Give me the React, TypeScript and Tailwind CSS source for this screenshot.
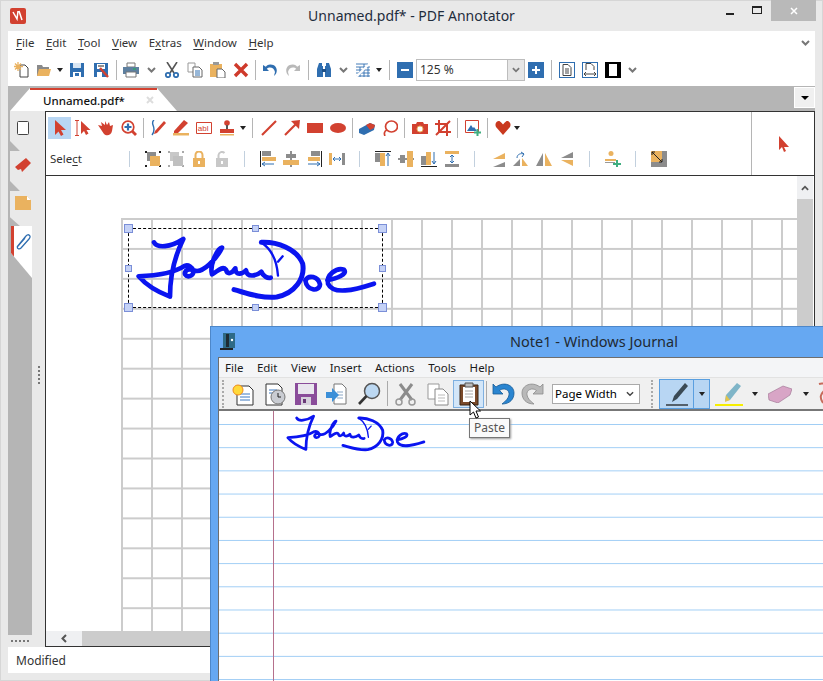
import type { ReactNode } from "react"

const R = "#d24130"
const B = "#2f6eb0"
const O = "#eab25f"
const G = "#8c8c8c"
const L = "#c8c8c8"

function Ico({ children, s = "w-4 h-4" }: { children: ReactNode; s?: string }) {
  return (
    <svg viewBox="0 0 16 16" className={s}>
      {children}
    </svg>
  )
}

function Slot({ children, w = "w-[23px]" }: { children?: ReactNode; w?: string }) {
  return <div className={`${w} h-full flex items-center justify-center shrink-0`}>{children}</div>
}

function Sep({ w = "w-[6px]", c = "bg-[#b5b5b5]", h = "h-[20px]" }: { w?: string; c?: string; h?: string }) {
  return (
    <div className={`${w} h-full flex items-center justify-center shrink-0`}>
      <div className={`w-px ${h} ${c}`} />
    </div>
  )
}

function Caret({ w = "w-[10px]" }: { w?: string }) {
  return (
    <div className={`${w} h-full flex items-center justify-center shrink-0`}>
      <div className="w-0 h-0 border-x-[3.5px] border-x-transparent border-t-[4px] border-t-[#222]" />
    </div>
  )
}

function Chevron({ w = "w-[16px]" }: { w?: string }) {
  return (
    <div className={`${w} h-full flex items-center justify-center shrink-0`}>
      <svg viewBox="0 0 9 6" className="w-[9px] h-[6px]">
        <path d="M1 1l3.5 3.5L8 1" fill="none" stroke="#777" strokeWidth="2" />
      </svg>
    </div>
  )
}

function Signature({ s }: { s: string }) {
  return (
    <svg viewBox="0 0 840 330" className={s} fill="none" stroke="#0a14f0" strokeWidth="14" strokeLinecap="round" strokeLinejoin="round">
      <path d="M102 82C112 100 150 98 190 72C170 112 150 170 150 245C110 230 80 212 56 184C110 182 165 172 195 152C218 146 232 182 205 184C186 182 194 156 222 166C248 178 292 128 306 98C292 100 268 150 276 178C290 172 306 150 318 164C322 180 336 176 346 160C346 184 368 176 378 166C382 190 410 182 424 170C430 186 444 190 452 188" />
      <path d="M424 82C470 80 530 100 548 146C556 190 524 236 470 246C420 250 380 234 342 224" strokeWidth="15" />
      <path d="M426 84C450 100 470 130 474 182M474 140L488 124" strokeWidth="7" />
      <path d="M556 196C566 178 594 184 600 208C598 232 560 228 556 196" />
      <path d="M622 196C650 190 684 178 672 164C650 156 618 180 624 206C640 240 700 226 762 206" />
    </svg>
  )
}

function Handle({ big, pos }: { big?: boolean; pos: string }) {
  return (
    <div
      className={`absolute ${pos} ${big ? "w-[9px] h-[9px]" : "w-[7px] h-[7px]"} bg-[#c5d2f6] border border-[#7b8fd8]`}
    />
  )
}

const mainToolbar = (
  <div className="h-[24px] flex items-center pl-[2px] mt-[3px]">
    <Slot>
      <Ico>
        <path d="M6 3h5l3 3v9H6z" fill="#fff" stroke="#444" />
        <path d="M4 0v9M0 4.500h9M1 1.500l6 6M7 1.500l-6 6" stroke={O} strokeWidth="1.300" />
      </Ico>
    </Slot>
    <Slot w="w-[22px]">
      <Ico>
        <path d="M1 3h5l1 2h6v9H1z" fill="#8a8a8a" />
        <path d="M1 14l2-7h12l-2 7z" fill={O} />
      </Ico>
    </Slot>
    <Caret />
    <Slot w="w-[24px]">
      <Ico>
        <path d="M1 1h14v14H1z" fill={B} />
        <path d="M4 1h8v5H4z" fill="#d9e6f3" />
        <path d="M4 10h8v5H4z" fill="#fff" />
        <path d="M6 11h4v3H6z" fill={B} />
      </Ico>
    </Slot>
    <Slot w="w-[24px]">
      <Ico>
        <path d="M1 1h14v14H1z" fill={B} />
        <path d="M4 2h8v5H4z" fill="#fff" />
        <path d="M5 4h6" stroke="#222" />
        <path d="M4 10h5v5H4z" fill="#fff" />
        <path d="M7 6l8 9" stroke={R} strokeWidth="2.400" />
      </Ico>
    </Slot>
    <Sep />
    <Slot>
      <Ico>
        <path d="M4 1h8v4H4z" fill="#fff" stroke="#777" />
        <path d="M0 5h16v7H0z" fill="#5d7f9f" />
        <path d="M3 10h10v5H3z" fill="#fff" stroke="#777" />
        <path d="M10 7h3" stroke="#2fa36b" strokeWidth="1.500" />
      </Ico>
    </Slot>
    <Chevron w="w-[18px]" />
    <Slot>
      <Ico>
        <path d="M3 0l7 11M13 0L6 11" stroke="#555" strokeWidth="1.600" />
        <circle cx="4" cy="13" r="2.200" fill="none" stroke={B} strokeWidth="1.800" />
        <circle cx="12" cy="13" r="2.200" fill="none" stroke={B} strokeWidth="1.800" />
      </Ico>
    </Slot>
    <Slot>
      <Ico>
        <path d="M1 1h7l0 9H1z" fill="#fff" stroke="#999" />
        <path d="M6 5h6l3 3v7H6z" fill="#fff" stroke="#666" />
        <path d="M8 9h5M8 11h5M8 13h5" stroke={B} />
      </Ico>
    </Slot>
    <Slot>
      <Ico>
        <path d="M0 2h12v13H0z" fill={O} />
        <path d="M3 0h6v3H3z" fill="#999" />
        <path d="M7 7h5l3 3v6H7z" fill="#fff" stroke="#666" />
      </Ico>
    </Slot>
    <Slot>
      <Ico>
        <path d="M2 2l12 12M14 2L2 14" stroke="#cf3a2b" strokeWidth="3.400" />
      </Ico>
    </Slot>
    <Sep />
    <Slot w="w-[24px]">
      <Ico>
        <path d="M1 3v6h6L4.800 6.800C7 4.500 12 5 13 10L12 14C17 10 15 2 8 2.500C6.500 2.600 5 3.300 3.800 4.800z" fill={B} />
      </Ico>
    </Slot>
    <Slot w="w-[22px]">
      <Ico>
        <path d="M15 3v6H9l2.200-2.200C9 4.500 4 5 3 10L4 14C-1 10 1 2 8 2.500C9.500 2.600 11 3.300 12.200 4.800z" fill="#b9b9b9" />
      </Ico>
    </Slot>
    <Sep w="w-[8px]" />
    <Slot>
      <Ico>
        <path d="M3 1h3v3h1v11H1V7zM13 1h-3v3H9v11h6V7z" fill={B} />
        <path d="M6 7h4v3H6z" fill="#1d4f86" />
      </Ico>
    </Slot>
    <Chevron />
    <Slot>
      <Ico>
        <path d="M1 2h12M1 5h14M1 8h14M1 11h14M1 14h14M5 5v10M9 2v13M13 5v10" stroke={B} strokeWidth=".9" />
        <path d="M1 15L13 3" stroke="#fff" strokeWidth="2" />
      </Ico>
    </Slot>
    <Caret />
    <Sep w="w-[10px]" />
    <Slot w="w-[22px]">
      <div className="w-4 h-4 bg-[#2f6eb0] flex items-center justify-center">
        <div className="w-2 h-[2px] bg-white" />
      </div>
    </Slot>
    <div className="w-[109px] h-[22px] border border-[#bdbdbd] flex items-center justify-between shrink-0 text-[12px] text-[#333] pl-[3px]">
      125 %
      <div className="w-[17px] h-full bg-[#e6e6e6] border-l border-[#bdbdbd] flex items-center justify-center">
        <svg viewBox="0 0 9 6" className="w-[8px] h-[6px]">
          <path d="M1 1l3.500 3.500L8 1" fill="none" stroke="#777" strokeWidth="2" />
        </svg>
      </div>
    </div>
    <Slot w="w-[22px]">
      <div className="w-4 h-4 bg-[#2f6eb0] flex items-center justify-center text-white relative">
        <div className="w-2 h-[2px] bg-white" />
        <div className="absolute w-[2px] h-2 bg-white" />
      </div>
    </Slot>
    <Sep w="w-[8px]" />
    <Slot>
      <div className="w-4 h-4 border border-[#2f6eb0] flex items-center justify-center">
        <svg viewBox="0 0 10 12" className="w-[10px] h-3">
          <path d="M1 .5h5l3 3v8H1zM3 5h4M3 7h4M3 9h4" fill="none" stroke="#444" />
        </svg>
      </div>
    </Slot>
    <Slot>
      <div className="w-4 h-4 border border-[#2f6eb0] flex items-center justify-center">
        <svg viewBox="0 0 14 14" className="w-[14px] h-[14px]">
          <path d="M3 7V.5h5l3 3V7M1 11h12M1 11l2-2M1 11l2 2M13 11l-2-2M13 11l-2 2" fill="none" stroke="#444" />
        </svg>
      </div>
    </Slot>
    <Slot>
      <div className="w-4 h-4 bg-black flex items-center justify-center">
        <div className="w-2 h-3 bg-white" />
      </div>
    </Slot>
    <Chevron />
  </div>
)

const drawRow = (
  <div className="h-[31px] flex items-center pl-[2px]">
    <div className="w-[23px] h-[22px] bg-[#b8d6f3] flex items-center justify-center shrink-0">
      <Ico>
        <path d="M3 0v15l3.500-3.500 2.500 4.500 2.500-1.500-2.500-4.500h5z" fill={R} />
      </Ico>
    </div>
    <Slot>
      <Ico>
        <path d="M0 .5h4M0 15.500h4M2 1v14" stroke={R} />
        <path d="M6 1v13l3-3 2 4 2.500-1.500-2-3.500h4z" fill={R} />
      </Ico>
    </Slot>
    <Slot>
      <Ico>
        <path d="M0 5l4 1-1-4 4 3 0-4 2 4 2-3 1 4 3-1-1 6c-1 5-6 5-8 3z" fill={R} />
      </Ico>
    </Slot>
    <Slot>
      <Ico>
        <circle cx="7" cy="7" r="5.800" fill="#fff" stroke={R} strokeWidth="1.700" />
        <path d="M7 3.500v7M3.500 7h7" stroke={B} strokeWidth="2.200" />
        <path d="M11 11l4 4" stroke={R} strokeWidth="2.800" />
      </Ico>
    </Slot>
    <Sep />
    <Slot>
      <Ico>
        <path d="M4 0c-5 4 4 7-2 15" fill="none" stroke={B} strokeWidth="1.400" />
        <path d="M5 11L14 1l2 2-9 10-3 1z" fill={R} />
      </Ico>
    </Slot>
    <Slot>
      <Ico>
        <path d="M1 11L11 0l4 3-10 10H1z" fill={R} />
        <path d="M0 13h16v2.500H0z" fill={O} />
      </Ico>
    </Slot>
    <Slot>
      <Ico>
        <path d="M.5 2.500h15v11H.500z" fill="#fff" stroke={R} />
        <text x="1.800" y="11" fontSize="8" fill={R} fontFamily="Liberation Sans">abl</text>
      </Ico>
    </Slot>
    <Slot>
      <Ico>
        <circle cx="8" cy="3" r="2.800" fill={R} />
        <path d="M7 5h2v4H7z" fill="#555" />
        <path d="M1 9h14v4H1z" fill={R} />
        <path d="M1 14h14v1.500H1z" fill={O} />
      </Ico>
    </Slot>
    <Caret />
    <Sep w="w-[9px]" />
    <Slot>
      <Ico>
        <path d="M1 15L15 1" stroke={R} strokeWidth="2.200" />
      </Ico>
    </Slot>
    <Slot>
      <Ico>
        <path d="M1 15L12 4" stroke={R} strokeWidth="2.200" />
        <path d="M7 1l9-1-1 9z" fill={R} />
      </Ico>
    </Slot>
    <Slot>
      <Ico>
        <path d="M0 3h16v10H0z" fill={R} />
      </Ico>
    </Slot>
    <Slot>
      <Ico>
        <ellipse cx="8" cy="8" rx="8" ry="5" fill={R} />
      </Ico>
    </Slot>
    <Sep />
    <Slot>
      <Ico>
        <path d="M0 9l11-6 5 2-1 5-10 5-5-2z" fill={B} />
        <path d="M7 5l4-2 5 2-1 3-4 2z" fill={R} />
      </Ico>
    </Slot>
    <Slot>
      <Ico>
        <ellipse cx="9.500" cy="6.500" rx="6" ry="5.500" fill="none" stroke={R} strokeWidth="1.700" />
        <path d="M5 10c-3 1-3 4-2 6" fill="none" stroke={R} strokeWidth="1.700" />
      </Ico>
    </Slot>
    <Sep w="w-[7px]" />
    <Slot>
      <Ico>
        <path d="M0 4h4l1-2h6l1 2h4v10H0z" fill={R} />
        <circle cx="8" cy="9" r="3" fill="#fff" stroke={O} />
      </Ico>
    </Slot>
    <Slot>
      <Ico>
        <path d="M4 0v12h12M0 4h12v12M1 15L15 1" fill="none" stroke={R} strokeWidth="2" />
      </Ico>
    </Slot>
    <Sep w="w-[7px]" />
    <Slot>
      <Ico>
        <path d="M.5.5h13v12H.500z" fill="#fff" stroke={R} />
        <path d="M2 11l4-6 2 3 1-1 3 4z" fill={B} />
        <path d="M9 12.500h7M12.500 9v7" stroke="#3fae80" strokeWidth="2" />
      </Ico>
    </Slot>
    <Sep w="w-[7px]" />
    <Slot>
      <Ico>
        <path d="M8 15L1 7C-1 3 3 0 5 1.500c1 .5 2 1.500 3 3 1-1.500 2-2.500 3-3C13 0 17 3 15 7z" fill="#c9391f" />
      </Ico>
    </Slot>
    <Caret w="w-[6px]" />
  </div>
)

const alignIcons = [
  <><path d="M0 0h2v2H0zM14 0h2v2h-2zM0 14h2v2H0zM14 14h2v2h-2z" fill="#222" /><path d="M2 1h9v9H2z" fill={G} /><path d="M5 5h10v10H5z" fill={O} /></>,
  <><path d="M0 0h2v2H0zM14 0h2v2h-2zM0 14h2v2H0zM14 14h2v2h-2z" fill="#aaa" /><path d="M2 1h9v9H2z" fill={L} /><path d="M5 5h10v10H5z" fill="#c0c0c0" /></>,
  <><path d="M2 7h12v9H2z" fill={O} /><path d="M4.500 7V4a3.500 3.500 0 017 0v3" fill="none" stroke={O} strokeWidth="2" /><path d="M7 10h2v3H7z" fill="#fff" /></>,
  <><path d="M2 7h12v9H2z" fill={L} /><path d="M4.500 7V4a3.500 3.500 0 016-2" fill="none" stroke={L} strokeWidth="2" /><path d="M7 10h2v3H7z" fill="#fff" /></>,
]

const layoutIcons = [
  <><path d="M.5 0v16" stroke="#222" /><path d="M2 0h9v5H2z" fill={G} /><path d="M2 6h14v4H2z" fill={O} /><path d="M2 13h12M2 13l3-2M2 13l3 2" stroke={B} fill="none" /></>,
  <><path d="M8 0v16" stroke="#222" /><path d="M3 3h10v4H3z" fill={G} /><path d="M0 9h16v5H0z" fill={O} /></>,
  <><path d="M15.500 0v16" stroke="#222" /><path d="M5 0h9v5H5z" fill={G} /><path d="M2 6h12v4H2z" fill={O} /><path d="M2 13h12M14 13l-3-2M14 13l-3 2" stroke={B} fill="none" /></>,
  <><path d="M0 2h3v12H0z" fill={O} /><path d="M13 2h3v12h-3z" fill={G} /><path d="M4 8h8M4 8l2-2M4 8l2 2M12 8l-2-2M12 8l-2 2" stroke={B} fill="none" /></>,
]

const arrangeIcons = [
  <><path d="M0 .5h16" stroke="#222" /><path d="M0 2h5v9H0z" fill={G} /><path d="M5 2h5v13H5z" fill={O} /><path d="M13 15V2M13 2l-2 3M13 2l2 3" stroke={B} fill="none" /></>,
  <><path d="M0 8h16" stroke="#222" /><path d="M2 4h5v8H2z" fill={G} /><path d="M9 0h6v16H9z" fill={O} /></>,
  <><path d="M0 15.500h16" stroke="#222" /><path d="M0 5h5v9H0z" fill={G} /><path d="M5 1h5v13H5z" fill={O} /><path d="M13 1v12M13 13l-2-3M13 13l2-3" stroke={B} fill="none" /></>,
  <><path d="M1 0h14v3H1z" fill={O} /><path d="M1 13h14v3H1z" fill={G} /><path d="M8 4v8M8 4l-2 2M8 4l2 2M8 12l-2-2M8 12l2-2" stroke={B} fill="none" /></>,
]

const flipIcons = [
  <><path d="M3 8L15 2v6z" fill={O} /><path d="M3 16l12-5v5z" fill={G} /></>,
  <><path d="M0 15l7-7v7z" fill={G} /><path d="M9 7l6 8H9z" fill={O} /><path d="M4 7c0-4 4-5 7-4M11 3L8 1M11 3L9 6" stroke={B} fill="none" /></>,
  <><path d="M7 2v13H0z" fill={G} /><path d="M9 2v13h7z" fill={O} /></>,
  <><path d="M14 1v6H2z" fill={G} /><path d="M2 9h12v6z" fill={O} /></>,
]

const editRow = (
  <div className="h-[32px] flex items-center">
    <div className="w-[72px] pl-[4px] text-[11.500px] text-[#333] shrink-0">
      Sele<u className="underline-offset-2">c</u>t
    </div>
    <Sep w="w-[23px]" c="bg-[#c2d0de]" h="h-[16px]" />
    {alignIcons.map((icon, i) => (
      <Slot key={i}>
        <Ico>{icon}</Ico>
      </Slot>
    ))}
    <Sep w="w-[23px]" c="bg-[#c2d0de]" h="h-[16px]" />
    {layoutIcons.map((icon, i) => (
      <Slot key={i}>
        <Ico>{icon}</Ico>
      </Slot>
    ))}
    <Sep w="w-[23px]" c="bg-[#c2d0de]" h="h-[16px]" />
    {arrangeIcons.map((icon, i) => (
      <Slot key={i}>
        <Ico>{icon}</Ico>
      </Slot>
    ))}
    <Sep w="w-[23px]" c="bg-[#c2d0de]" h="h-[16px]" />
    {flipIcons.map((icon, i) => (
      <Slot key={i}>
        <Ico>{icon}</Ico>
      </Slot>
    ))}
    <Sep w="w-[23px]" c="bg-[#c2d0de]" h="h-[16px]" />
    <Slot>
      <Ico>
        <circle cx="6" cy="2.500" r="2.500" fill={O} />
        <path d="M0 8h11v2H0z" fill={O} />
        <path d="M0 11h10v1H0z" fill="#999" />
        <path d="M8 13h8M12 9v7" stroke="#3fae80" strokeWidth="2" />
      </Ico>
    </Slot>
    <Sep w="w-[23px]" c="bg-[#c2d0de]" h="h-[16px]" />
    <Slot>
      <Ico>
        <path d="M0 0h16v16H0z" fill={G} />
        <path d="M0 0h11v11H0z" fill={O} />
        <path d="M1 1l10 10M1 1v3M1 1h3M11 11V8M11 11H8" stroke="#222" fill="none" />
      </Ico>
    </Slot>
  </div>
)

function Sidebar() {
  return (
    <div className="w-[37px] shrink-0 flex">
      <div className="w-[24px] bg-[#b5b5b5] flex flex-col pl-[2px]">
        <div className="h-[40px] pb-[6px] bg-[#e9e9e9] [clip-path:polygon(0_0,100%_0,100%_100%,45%_100%,0_75%)] flex items-center justify-center">
          <svg viewBox="0 0 12 14" className="w-[12px] h-[14px] ml-[4px]">
            <rect x=".5" y=".5" width="11" height="13" rx="1" fill="#fff" stroke="#444" />
          </svg>
        </div>
        <div className="h-[40px] pb-[12px] bg-[#e9e9e9] [clip-path:polygon(0_0,100%_0,100%_100%,45%_100%,0_75%)] flex items-center justify-center">
          <svg viewBox="0 0 16 16" className="w-4 h-4 ml-[4px]">
            <path d="M0 10L11 1l5 5-9 9-1-3-3 1z" fill={R} />
          </svg>
        </div>
        <div className="h-[35px] pb-[12px] bg-[#e9e9e9] [clip-path:polygon(0_0,100%_0,100%_100%,45%_100%,0_75%)] flex items-center justify-center">
          <svg viewBox="0 0 16 14" className="w-4 h-[14px] ml-[4px]">
            <path d="M0 0h12l4 4v10H0z" fill={O} />
            <path d="M12 0l4 4h-4z" fill="#fff" />
          </svg>
        </div>
        <div className="h-[52px] ml-px bg-white border-l-[3px] border-[#d24130] [clip-path:polygon(0_0,100%_0,100%_100%,0_52%)] flex items-start justify-center pt-[6px]">
          <svg viewBox="0 0 16 20" className="w-4 h-5">
            <path d="M2 15L11 4c2-3 6 0 3 3l-8 9c-2 2-5 0-3-2l7-8" fill="none" stroke="#2f6eb0" strokeWidth="1.300" />
          </svg>
        </div>
        <div className="flex-1" />
        <div className="h-[12px] bg-[#e9e9e9] -ml-[2px] flex items-center justify-center gap-[2px]">
          {[0, 1, 2, 3, 4].map((i) => (
            <div key={i} className="w-[2px] h-[2px] bg-[#777]" />
          ))}
        </div>
      </div>
      <div className="flex-1 flex flex-col items-center justify-center gap-[2px] pb-[8px]">
        {[0, 1, 2, 3, 4].map((i) => (
          <div key={i} className="w-[2px] h-[2px] bg-[#777]" />
        ))}
      </div>
    </div>
  )
}

function JournalWindow() {
  return (
    <div className="absolute left-[210px] top-[326px] w-[660px] h-[400px] bg-[#66a8f2] border border-[#4d87c9] flex flex-col font-['Noto_Sans',sans-serif]">
      <div className="h-[30px] relative flex items-center justify-center pl-[108px] shrink-0">
        <div className="absolute left-[9px] top-[6px]">
          <svg viewBox="0 0 16 18" className="w-4 h-[18px]">
            <path d="M3 0h12v15H3z" fill="#2e6a86" />
            <path d="M0 15h13v2H0z" fill="#222" />
            <path d="M6 1h3v13H6z" fill="#1e2b33" />
            <circle cx="12" cy="7" r="1.200" fill="#fff" />
          </svg>
        </div>
        <span className="text-[14.500px] text-[#1f2a33]">Note1 - Windows Journal</span>
      </div>
      <div className="flex-1 ml-[7px] border-l border-t border-[#6e6e6e] bg-[#f4f5f7] flex flex-col">
        <div className="h-[20px] flex items-center text-[11.500px] text-[#1a1a1a] gap-[13.500px] pl-[6px] shrink-0 border-b border-[#e2e2e2]">
          <span>File</span>
          <span>Edit</span>
          <span>View</span>
          <span>Insert</span>
          <span>Actions</span>
          <span>Tools</span>
          <span>Help</span>
        </div>
        <div className="h-[33px] flex items-center bg-[#f0f0f0] border-b-2 border-[#777] pl-[3px] shrink-0">
          <div className="w-[2px] h-[28px] mr-[3px] border-l-2 border-dotted border-[#aaa]" />
          <Slot w="w-[32px]">
            <svg viewBox="0 0 24 24" className="w-6 h-6">
              <path d="M6 4h12l4 4v15H6z" fill="#fff" stroke="#333" />
              <path d="M9 12h10M9 15h10M9 18h10" stroke="#3c78c0" />
              <circle cx="7" cy="8" r="5" fill="#ffd93a" stroke="#f08a1c" />
            </svg>
          </Slot>
          <Slot w="w-[31px]">
            <svg viewBox="0 0 24 24" className="w-6 h-6">
              <path d="M3 2h12l4 4v17H3z" fill="#fff" stroke="#333" />
              <path d="M6 8h8M6 11h4" stroke="#3c78c0" />
              <circle cx="15" cy="15" r="7" fill="#c9ccd2" stroke="#777" />
              <path d="M15 11v4h3" stroke="#222" fill="none" />
            </svg>
          </Slot>
          <Slot w="w-[31px]">
            <svg viewBox="0 0 24 24" className="w-6 h-6">
              <path d="M1 1h22v22H1z" fill="#8a4c9a" />
              <path d="M4 2h16v10H4z" fill="#e9e6ee" />
              <path d="M7 15h10v8H7z" fill="#d6d1dc" />
              <path d="M9 17h3v4H9z" fill="#6a3a78" />
            </svg>
          </Slot>
          <Slot w="w-[32px]">
            <svg viewBox="0 0 24 24" className="w-6 h-6">
              <path d="M9 2h8l4 4v16H9z" fill="#fff" stroke="#777" />
              <path d="M12 10h6M12 13h6M12 16h6" stroke="#8aa6c4" />
              <path d="M1 10h6V6l7 7-7 7v-4H1z" fill="#3b8fd8" />
            </svg>
          </Slot>
          <Slot w="w-[32px]">
            <svg viewBox="0 0 24 24" className="w-6 h-6">
              <circle cx="15" cy="9" r="7.500" fill="#bcd8f2" stroke="#555" strokeWidth="1.500" />
              <path d="M9.500 14L2 22" stroke="#333" strokeWidth="2.600" />
            </svg>
          </Slot>
          <Sep w="w-[4px]" c="bg-[#aaa]" h="h-[25px]" />
          <Slot w="w-[33px]">
            <svg viewBox="0 0 24 24" className="w-6 h-6">
              <path d="M18 2L6 18M6 2l12 16" stroke="#8c8c8c" strokeWidth="3" />
              <circle cx="5" cy="20" r="3" fill="none" stroke="#999" strokeWidth="1.500" />
              <circle cx="18" cy="20" r="3" fill="none" stroke="#999" strokeWidth="1.500" />
            </svg>
          </Slot>
          <Slot w="w-[31px]">
            <svg viewBox="0 0 24 24" className="w-6 h-6">
              <path d="M2 2h11v15H2z" fill="#fff" stroke="#999" />
              <path d="M9 7h8l5 5v11H9z" fill="#fff" stroke="#888" />
              <path d="M12 13h7M12 16h7M12 19h7" stroke="#bbb" />
            </svg>
          </Slot>
          <div className="w-[31px] h-[28px] bg-[#d3e6f8] border border-[#7fb0e0] flex items-center justify-center shrink-0">
            <svg viewBox="0 0 24 24" className="w-6 h-6">
              <path d="M3 3h18v20H3z" fill="#7a4a2a" stroke="#3a2412" />
              <path d="M6 5h12v15H6z" fill="#fff" />
              <path d="M8 9h8M8 12h8M8 15h8" stroke="#aaa" />
              <path d="M8 1h8v4H8z" fill="#bbb" stroke="#555" />
            </svg>
          </div>
          <Sep w="w-[4px]" c="bg-[#aaa]" h="h-[25px]" />
          <Slot w="w-[30px]">
            <svg viewBox="0 0 24 24" className="w-6 h-6">
              <path d="M2 2v10h10L8.500 8.500C13 5 19 8 18 13c-.5 3-3 6-7 9 8 0 12-5 12-11C23 3 13-1 5 5z" fill="#2a85d0" stroke="#165a96" strokeWidth=".8" />
            </svg>
          </Slot>
          <Slot w="w-[30px]">
            <svg viewBox="0 0 24 24" className="w-6 h-6">
              <path d="M22 2v10H12l3.500-3.500C11 5 5 8 6 13c.5 3 3 6 7 9-8 0-12-5-12-11C1 3 11-1 19 5z" fill="#b9b9b9" stroke="#8a8a8a" strokeWidth=".8" />
            </svg>
          </Slot>
          <div className="w-[88px] h-[20px] ml-[4px] bg-white border border-[#aaa] flex items-center justify-between pl-[2px] pr-[5px] text-[11.500px] text-black shrink-0">
            Page Width
            <svg viewBox="0 0 9 6" className="w-[8px] h-[6px]">
              <path d="M1 1l3.500 3.500L8 1" fill="none" stroke="#444" strokeWidth="1.600" />
            </svg>
          </div>
          <div className="w-[2px] h-[28px] ml-[11px] mr-[6px] border-l-2 border-dotted border-[#aaa]" />
          <div className="w-[51px] h-[30px] bg-[#b8d6f3] border border-[#5a9fe0] flex shrink-0">
            <div className="flex-1 border-r border-[#5a9fe0] flex items-center justify-center">
              <svg viewBox="0 0 24 24" className="w-6 h-6">
                <path d="M20 1l3 3-11 13-5 3 2-6z" fill="#3a4a55" />
                <path d="M1 23h22" stroke="#111" strokeWidth="1.200" />
              </svg>
            </div>
            <div className="w-[15px] flex items-center justify-center">
              <Caret w="w-[10px]" />
            </div>
          </div>
          <Slot w="w-[38px]">
            <svg viewBox="0 0 28 24" className="w-[28px] h-6">
              <path d="M22 1l4 3-11 14-5 1 1-6z" fill="#7fb5c8" />
              <path d="M11 13l4 5-5 2z" fill="#e3c44a" />
              <path d="M0 23h28" stroke="#f7ee00" strokeWidth="2" />
            </svg>
          </Slot>
          <Caret w="w-[14px]" />
          <Slot w="w-[35px]">
            <svg viewBox="0 0 24 18" className="w-6 h-[18px]">
              <path d="M0 9L15 1l9 3-2 6-12 8-9-3z" fill="#d8a5c6" stroke="#9c7091" strokeWidth=".6" />
            </svg>
          </Slot>
          <Caret w="w-[17px]" />
          <Slot w="w-[20px]">
            <svg viewBox="0 0 16 24" className="w-4 h-6">
              <path d="M3 2c6-2 10 3 5 7-3 3-5 6-1 12" fill="none" stroke="#c76a5a" strokeWidth="2" />
            </svg>
          </Slot>
        </div>
        <div className="flex-1 bg-white bg-[linear-gradient(#9fcdf5_1px,transparent_1px)] bg-[size:100%_23.200px] bg-[position:0_13px]">
          <div className="w-[55px] h-full border-r border-[#b5708c]" />
        </div>
      </div>
    </div>
  )
}

export default function App() {
  return (
    <div className="relative w-[823px] h-[681px] overflow-hidden bg-[#e9e9e9] shadow-[inset_0_0_0_1px_#d6d6d6] flex flex-col font-['Noto_Sans',sans-serif] text-[#222]">
      {/* title bar */}
      <div className="h-[31px] shrink-0 grid grid-cols-[1fr_auto_1fr] items-center">
        <div className="pl-[10px]">
          <svg viewBox="0 0 16 16" className="w-4 h-4">
            <rect width="16" height="16" rx="2" fill="#d24130" />
            <path d="M3 4l4 7 1-8M9 3l3 9" stroke="#fff" strokeWidth="1.500" fill="none" />
          </svg>
        </div>
        <div className="text-[14px] text-[#1f2d3d]">Unnamed.pdf* - PDF Annotator</div>
        <div className="flex justify-end self-start h-[21px] pr-[7px]">
          <div className="w-[26px] flex items-center justify-center">
            <div className="w-[8px] h-[2px] bg-[#222] mt-[6px]" />
          </div>
          <div className="w-[28px] flex items-center justify-center">
            <div className="w-[10px] h-[8px] border border-[#222] border-t-2 -mt-[2px]" />
          </div>
          <div className="w-[45px] bg-[#b9b9b9] flex items-center justify-center">
            <svg viewBox="0 0 8 8" className="w-2 h-2">
              <path d="M1 1l6 6M7 1L1 7" stroke="#fff" strokeWidth="1.500" />
            </svg>
          </div>
        </div>
      </div>

      <div className="flex-1 mx-[8px] mb-[8px] flex flex-col">
        {/* menu and main toolbar */}
        <div className="h-[55px] bg-white shrink-0">
          <div className="h-[24px] flex items-center justify-between pl-[8px] pr-[2px]">
            <div className="flex gap-[11.500px] text-[11.500px] text-[#333]">
              <span><u className="underline-offset-2">F</u>ile</span>
              <span><u className="underline-offset-2">E</u>dit</span>
              <span><u className="underline-offset-2">T</u>ool</span>
              <span><u className="underline-offset-2">V</u>iew</span>
              <span>E<u className="underline-offset-2">x</u>tras</span>
              <span><u className="underline-offset-2">W</u>indow</span>
              <span><u className="underline-offset-2">H</u>elp</span>
            </div>
            <Chevron />
          </div>
          {mainToolbar}
        </div>

        {/* tab strip */}
        <div className="h-[25px] bg-[#b5b5b5] shrink-0 flex items-start justify-between relative">
          <div className="w-[167px] h-[23px] ml-[2px] mt-[2px] bg-white [clip-path:polygon(12%_0,88%_0,100%_100%,0_100%)] relative">
            <div className="h-[2px] bg-[#d24130] mx-[20px]" />
            <div className="absolute left-[33px] top-[4px] text-[11.500px] font-medium text-[#111]">Unnamed.pdf*</div>
            <div className="absolute left-[136px] top-[8px]">
              <svg viewBox="0 0 8 8" className="w-2 h-2">
                <path d="M1 1l6 6M7 1L1 7" stroke="#ddd" strokeWidth="2" />
              </svg>
            </div>
          </div>
          <div className="w-[21px] h-[21px] mt-px bg-[#f0f0f0] border border-white flex items-center justify-center">
            <div className="w-0 h-0 border-x-[4px] border-x-transparent border-t-[4px] border-t-black" />
          </div>
        </div>

        <div className="flex-1 flex min-h-0">
          <Sidebar />
          <div className="flex-1 flex flex-col border-x border-b border-[#333] min-w-0 bg-white">
            {/* tool panels */}
            <div className="h-[65px] shrink-0 border-y border-[#333] flex">
              <div className="flex-1 min-w-0">
                {drawRow}
                {editRow}
              </div>
              <div className="w-[63px] border-l border-[#b5b5b5] flex items-center justify-center">
                <svg viewBox="0 0 16 16" className="w-4 h-4 ml-[1px]">
                  <path d="M3 0v14l3-3 2 5 2-1-2-4h5z" fill="#d24130" />
                </svg>
              </div>
            </div>

            {/* document */}
            <div className="flex-1 flex min-h-0">
              <div className="flex-1 flex flex-col min-w-0">
                <div className="flex-1 pl-[75px] pt-[42px] min-h-0">
                  <div className="h-full relative bg-[linear-gradient(to_right,#cccccc_2px,transparent_2px),linear-gradient(to_bottom,#cccccc_2px,transparent_2px)] bg-[size:30px_29.950px]">
                    <div className="absolute left-[7px] top-[10px] w-[255px] h-[80px] border border-dashed border-black" />
                    <Handle big pos="left-[3px] top-[6px]" />
                    <Handle pos="left-[131px] top-[7px]" />
                    <Handle big pos="left-[257px] top-[6px]" />
                    <Handle pos="left-[4px] top-[47px]" />
                    <Handle pos="left-[258px] top-[47px]" />
                    <Handle big pos="left-[3px] top-[85px]" />
                    <Handle pos="left-[131px] top-[86px]" />
                    <Handle big pos="left-[257px] top-[85px]" />
                    <div className="absolute -left-[1px] -top-[3px]">
                      <Signature s="w-[280px] h-[110px]" />
                    </div>
                  </div>
                </div>
                <div className="h-[15px] shrink-0 bg-[#cccccc] flex">
                  <div className="w-[36px] bg-[#eff0f2] flex items-center justify-center">
                    <svg viewBox="0 0 6 9" className="w-[6px] h-[9px]">
                      <path d="M5 1L1.500 4.500 5 8" fill="none" stroke="#555" strokeWidth="2" />
                    </svg>
                  </div>
                </div>
              </div>
              <div className="w-[17px] shrink-0 flex flex-col pr-[1px]">
                <div className="h-[23px] bg-[#eff0f2] flex items-center justify-center">
                  <svg viewBox="0 0 9 6" className="w-[8px] h-[6px]">
                    <path d="M1 5l3.500-3.500L8 5" fill="none" stroke="#555" strokeWidth="2" />
                  </svg>
                </div>
                <div className="flex-1 bg-[#cccccc]" />
              </div>
            </div>
          </div>
        </div>

        {/* status bar */}
        <div className="h-[26px] bg-white shrink-0 flex items-center pl-[8px] pt-px text-[12px] text-[#333]">Modified</div>
      </div>

      <JournalWindow />

      {/* ink copied into the journal page */}
      <div className="absolute left-[277px] top-[402px]">
        <Signature s="w-[162px] h-[64px]" />
      </div>

      {/* tooltip and pointer */}
      <div className="absolute left-[469px] top-[418px] w-[41px] h-[20px] bg-[#fafafa] border border-[#767676] shadow-[1px_1px_2px_#999] text-[12px] text-[#555] flex items-center justify-center font-['Noto_Sans',sans-serif]">
        Paste
      </div>
      <div className="absolute left-[469px] top-[400px]">
        <svg viewBox="0 0 12 19" className="w-3 h-[19px]">
          <path d="M1 1v14l3.500-3 2.500 6 2.500-1-2.500-6h4.500z" fill="#fff" stroke="#000" />
        </svg>
      </div>
    </div>
  )
}
